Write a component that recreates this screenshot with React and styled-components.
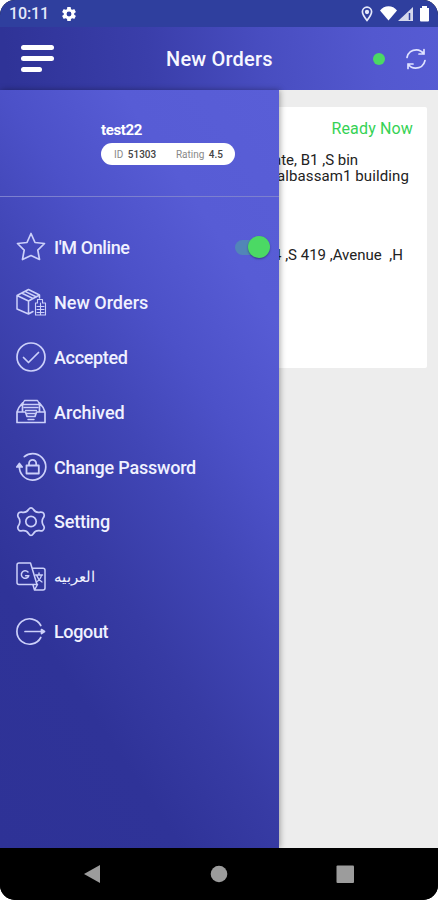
import React, { useState } from 'react';
import styled, { createGlobalStyle } from 'styled-components';

const GlobalStyle = createGlobalStyle`
  * {
    box-sizing: border-box;
  }
  body {
    margin: 0;
    background: #fff;
    font-family: Roboto, "Noto Sans", sans-serif;
  }
`;
const Phone = styled.div`
  display: flex;
  flex-direction: column;
  width: 438px;
  height: 900px;
  border-radius: 15px;
  overflow: hidden;
  background: #000;
`;
const StatusBar = styled.div`
  display: flex;
  align-items: center;
  height: 27px;
  padding: 1px 7px 0 9px;
  color: #fff;
  background: #2f3f9e;
`;
const Clock = styled.span`
  width: 40px;
  margin-right: 13px;
  font-size: 16px;
  font-weight: 500;
  line-height: 20px;
  letter-spacing: -0.1px;
  color: #e4e8fa;
`;
const StatusIcons = styled.div`
  display: flex;
  align-items: center;
  gap: 6px;
  margin-left: auto;
`;
const Header = styled.header`
  display: flex;
  align-items: center;
  height: 63px;
  padding: 0 11px 0 21px;
  background: linear-gradient(84deg, #2f3397 2%, #3a3eaa 34%, #484dc0 60%, #5358cf 85%, #565bd3 100%);
`;
const MenuButton = styled.button`
  display: flex;
  flex-direction: column;
  gap: 6px;
  width: 34px;
  padding: 0;
  border: 0;
  background: none;
  cursor: pointer;
`;
const MenuLine = styled.span`
  width: ${({ $short }) => ($short ? '21px' : '33px')};
  height: 5px;
  border-radius: 3px;
  background: #fff;
`;
const Title = styled.h1`
  flex: 1;
  margin: 0 0 0 111px;
  font-size: 20px;
  font-weight: 500;
  line-height: 24px;
  letter-spacing: 0.2px;
  color: #f7f7ff;
`;
const OnlineDot = styled.span`
  width: 12px;
  height: 12px;
  margin-right: 20px;
  border-radius: 50%;
  background: #4bd964;
`;
const Body = styled.div`
  position: relative;
  height: 758px;
  padding: 17px 11px 0 10px;
  background: #ededed;
`;
const Card = styled.article`
  height: 261px;
  padding: 12px 14px 0 0;
  border-radius: 2px;
  background: #fff;
`;
const State = styled.div`
  font-size: 16px;
  line-height: 20px;
  letter-spacing: 0.15px;
  text-align: right;
  color: #35d255;
`;
const Address = styled.p`
  margin: ${({ $top }) => $top}px 0 0;
  padding-left: 263px;
  font-size: 15px;
  line-height: 16px;
  white-space: nowrap;
  color: #222;
`;
const Line = styled.span`
  display: block;
  margin-left: ${({ $shift }) => $shift || 0}px;
  letter-spacing: ${({ $spacing }) => $spacing || 0}px;
`;
const Drawer = styled.aside`
  position: absolute;
  top: 0;
  left: 0;
  width: 279px;
  height: 100%;
  background: linear-gradient(
    236deg,
    #595ed7 0%,
    #575cd5 20%,
    #4c51c8 35%,
    #4146b6 48%,
    #373ba4 63%,
    #2f3398 77%,
    #2e3296 100%
  );
  box-shadow: 1px 0 6px rgba(0, 0, 0, 0.35);
`;
const Profile = styled.div`
  height: 107px;
  padding: 31px 0 0 101px;
  border-bottom: 1px solid #7c80cf;
`;
const UserName = styled.div`
  font-size: 15px;
  font-weight: 700;
  line-height: 18px;
  letter-spacing: -0.35px;
  color: #fff;
`;
const Stats = styled.div`
  display: flex;
  justify-content: space-between;
  align-items: center;
  width: 134px;
  height: 22px;
  margin-top: 4px;
  padding: 0 12px 0 13px;
  border-radius: 11px;
  font-size: 10px;
  color: #888;
  background: #fff;
`;
const Value = styled.b`
  margin-left: 2px;
  font-weight: 500;
  color: #444;
`;
const MenuList = styled.ul`
  margin: 0;
  padding: 23px 0 0;
  list-style: none;
`;
const MenuItem = styled.li`
  display: flex;
  align-items: center;
  height: 54.9px;
  padding: 0 9px 0 15px;
  color: #ccd0fa;
  cursor: pointer;
`;
const Label = styled.span`
  margin-left: 7px;
  padding-top: 1px;
  font-size: ${({ $size }) => $size || 18}px;
  font-weight: ${({ $weight }) => $weight || 500};
  line-height: 22px;
  letter-spacing: ${({ $spacing }) => $spacing || 0}px;
  color: #f0f1ff;
`;
const Switch = styled.button`
  display: flex;
  align-items: center;
  justify-content: ${({ $on }) => ($on ? 'flex-end' : 'flex-start')};
  width: 32px;
  height: 15px;
  margin-left: auto;
  margin-right: 3px;
  padding: 0;
  border: 0;
  border-radius: 8px;
  background: #5285b8;
  cursor: pointer;
`;
const Knob = styled.span`
  flex: none;
  width: 22px;
  height: 22px;
  margin-right: -3px;
  border-radius: 50%;
  background: #4bd964;
  box-shadow: 0 1px 2px rgba(0, 0, 0, 0.35);
`;
const NavBar = styled.nav`
  display: flex;
  justify-content: space-between;
  align-items: center;
  height: 52px;
  padding: 0 84px 0 83px;
  background: #000;
`;
const Icon = styled.svg`
  flex: none;
  fill: none;
  stroke: currentColor;
  stroke-width: 1.7;
  stroke-linecap: round;
  stroke-linejoin: round;
`;

const icons = {
  star: <path d="M16 2.500l4 9 9.500 1-6.700 6.600 1.700 9.400-8.500-4-8.500 4 1.700-9.400L2.500 12.500l9.500-1z" />,
  orders: (
    <>
      <path d="M18 25.500L13.500 28 2 23V9.500L13.500 3.500 24.500 9v3M2 9.500l11.500 5.500 11-6M13.500 15v12.500M6.500 7L18 12.500M10 5.300L21.500 11" strokeWidth="1.5" />
      <path d="M22.500 13.500h5V17h3v12h-10V17h2zM22 20.500h7M22 23.500h7M22 26.500h7M25.500 17v12" strokeWidth="1.1" />
    </>
  ),
  accepted: (
    <>
      <circle cx="16" cy="16" r="14" />
      <path d="M8.500 16.500l5 5L23.500 11.500" />
    </>
  ),
  archived: (
    <>
      <path d="M2 16h8.500l1.500 4.500h8l1.500-4.500H30v10.500H2zM2 16C3 12 5 9.500 7.500 7v9M30 16c-1-4-3-6.500-5.500-9v9" />
      <path d="M7.500 8l2-3.500h13l2 3.500M8 8.500h16M9 11.500h14M10.500 14.500h11M12 17.500h8M13 23.500h6" strokeWidth="1.4" />
    </>
  ),
  password: (
    <>
      <path d="M4.400 15.500A13.200 13.200 0 1 0 17.700 2.700c-3.300 0-6 1-8.400 3" />
      <path d="M1.800 16l2.600-3.500L7.200 16z" fill="currentColor" />
      <path d="M11.500 14.500h12.300v8H11.500zM14 14.500v-2a3.600 3.600 0 0 1 7.200 0v2" strokeWidth="1.8" />
    </>
  ),
  setting: (
    <>
      <path d="M13.500 3.500Q16 .3 18.500 3.500Q20.500 6.800 24.300 6.300Q28.800 5.500 29.200 9Q29.400 10.500 28 12.200Q26.300 15.500 28 18.800Q29.400 20.500 29.200 22Q28.800 25.500 24.300 24.700Q20.500 24.200 18.500 27.500Q16 31.500 13.500 27.500Q11.500 24.200 7.700 24.700Q3.200 25.500 2.800 22Q2.600 20.500 4 18.800Q5.700 15.500 4 12.200Q2.600 10.500 2.800 9Q3.200 5.500 7.700 6.300Q11.500 6.800 13.500 3.500z" />
      <circle cx="16" cy="15.500" r="5.200" />
    </>
  ),
  language: (
    <>
      <path d="M4 2h11.500l6.500 21.500H4a2 2 0 0 1-2-2V4a2 2 0 0 1 2-2zM17.500 7.200H28a2 2 0 0 1 2 2V27a2 2 0 0 1-2 2h-8.500L18 24M19.500 29l3-5.500" strokeWidth="1.5" />
      <path d="M13 11a3.800 3.800 0 1 0 .8 3.700h-3.200" strokeWidth="1.500" />
      <path d="M20.500 14h7M24 12v2M26.500 14c-.5 3-2.500 5.500-5.200 7M21.500 14c1 3 3 5.500 5.500 7" strokeWidth="1.400" />
    </>
  ),
  logout: (
    <>
      <path d="M25.800 9.500A12.700 12.700 0 1 0 25.800 21.500M10 15.500h16" />
      <path d="M26.500 13.500l3 2-3 2z" fill="currentColor" />
    </>
  ),
};

const items = [
  { icon: 'star', label: "I'M Online", toggle: true, spacing: -0.4 },
  { icon: 'orders', label: 'New Orders', spacing: 0 },
  { icon: 'accepted', label: 'Accepted', spacing: -0.35 },
  { icon: 'archived', label: 'Archived', spacing: 0 },
  { icon: 'password', label: 'Change Password', spacing: -0.22 },
  { icon: 'setting', label: 'Setting', spacing: -0.2 },
  { icon: 'language', label: 'العربيه', size: 15, weight: 500 },
  { icon: 'logout', label: 'Logout', spacing: -0.35 },
];

function StatusArea() {
  return (
    <StatusBar>
      <Clock>10:11</Clock>
      <svg width="14" height="14" viewBox="2 2 20 20" fill="#fff">
        <path d="M19.430 12.980c.04-.32.070-.64.070-.98s-.03-.66-.07-.98l2.110-1.650c.19-.15.240-.42.120-.64l-2-3.460c-.12-.22-.39-.3-.61-.22l-2.490 1c-.52-.4-1.080-.73-1.690-.98l-.38-2.650A.49.49 0 0 0 14 2h-4c-.25 0-.46.180-.49.420l-.38 2.650c-.61.250-1.170.590-1.690.98l-2.490-1c-.23-.09-.49 0-.61.220l-2 3.460c-.13.220-.07.490.12.640l2.110 1.650c-.04.320-.07.650-.07.980s.03.660.070.980l-2.110 1.650c-.19.150-.24.420-.12.640l2 3.460c.12.220.39.300.61.220l2.490-1c.52.400 1.080.730 1.690.98l.38 2.650c.03.240.240.420.49.420h4c.25 0 .46-.18.490-.42l.38-2.650c.61-.25 1.170-.59 1.690-.98l2.490 1c.23.090.49 0 .61-.22l2-3.460c.12-.22.070-.49-.12-.64zM12 15.500a3.500 3.500 0 1 1 0-7 3.500 3.500 0 0 1 0 7z" />
      </svg>
      <StatusIcons>
        <svg width="12" height="16" viewBox="0 0 12 16" fill="none" stroke="#e4e8fa" strokeWidth="1.700">
          <path d="M6 14.500C3 10.700 1.400 8.300 1.400 5.800a4.600 4.600 0 0 1 9.200 0C10.600 8.300 9 10.700 6 14.500z" />
          <circle cx="6" cy="6" r="1.300" fill="#fff" />
        </svg>
        <svg width="52" height="18" viewBox="0 0 52 18" fill="#fff">
          <path d="M1 5.500C5-.2 14-.2 18 5.500L9.500 15.500z" />
          <path d="M34 2v14H19z" opacity=".8" />
          <path d="M30.500 8v7" stroke="#2f3f9e" strokeWidth="1.500" />
          <path d="M43 1h5v2h-5zM41 3h9v12.500a1 1 0 0 1-1 1h-7a1 1 0 0 1-1-1z" />
        </svg>
      </StatusIcons>
    </StatusBar>
  );
}

function App() {
  const [online, setOnline] = useState(true);
  const [open, setOpen] = useState(true);
  return (
    <Phone>
      <GlobalStyle />
      <StatusArea />
      <Header>
        <MenuButton aria-label="Menu" onClick={() => setOpen(!open)}>
          <MenuLine />
          <MenuLine />
          <MenuLine $short />
        </MenuButton>
        <Title>New Orders</Title>
        <OnlineDot />
        <Icon width="22" height="22" viewBox="0 0 22 22" color="#dfe2ff">
          <path d="M2 9.500C3 4.500 7 1.800 11.500 1.800c3 0 5.500 1.500 7.500 4.200M19 1.500V6h-5M20 12.500c-1 5-5 7.700-9.500 7.700-3 0-5.500-1.500-7.500-4.200M3 20.500V16h5" />
        </Icon>
      </Header>
      <Body>
        <Card>
          <State>Ready Now</State>
          <Address $top={13}>
            <Line $spacing={0}>ate, B1 ,S bin</Line>
            <Line $shift={4} $spacing={0.1}>albassam1 building</Line>
          </Address>
          <Address $top={63}>
            <Line $spacing={0}>4 ,S 419 ,Avenue&nbsp; ,H</Line>
          </Address>
        </Card>
        {
          open ? (
            <Drawer>
              <Profile>
                <UserName>test22</UserName>
                <Stats>
                  <span>ID <Value>51303</Value></span>
                  <span>Rating <Value>4.5</Value></span>
                </Stats>
              </Profile>
              <MenuList>
                {items.map((item) => (
                  <MenuItem key={item.icon}>
                    <Icon width="32" height="32" viewBox="0 0 32 32">
                      {icons[item.icon]}
                    </Icon>
                    <Label $size={item.size} $weight={item.weight} $spacing={item.spacing}>
                      {item.label}
                    </Label>
                    {
                      item.toggle ? (
                        <Switch $on={online} aria-label="Online" onClick={() => setOnline(!online)}>
                          <Knob />
                        </Switch>
                      ) : null
                    }
                  </MenuItem>
                ))}
              </MenuList>
            </Drawer>
          ) : null
        }
      </Body>
      <NavBar>
        <svg width="18" height="18" viewBox="0 0 18 18" fill="#9c9c9c">
          <path d="M1 9L17 0v18z" />
        </svg>
        <svg width="18" height="18" viewBox="0 0 18 18" fill="#9c9c9c">
          <circle cx="9" cy="9" r="8.300" />
        </svg>
        <svg width="18" height="18" viewBox="0 0 18 18" fill="#9c9c9c">
          <rect x="0.500" y="0.500" width="17.500" height="17.500" rx="1" />
        </svg>
      </NavBar>
    </Phone>
  );
}

export default App;
